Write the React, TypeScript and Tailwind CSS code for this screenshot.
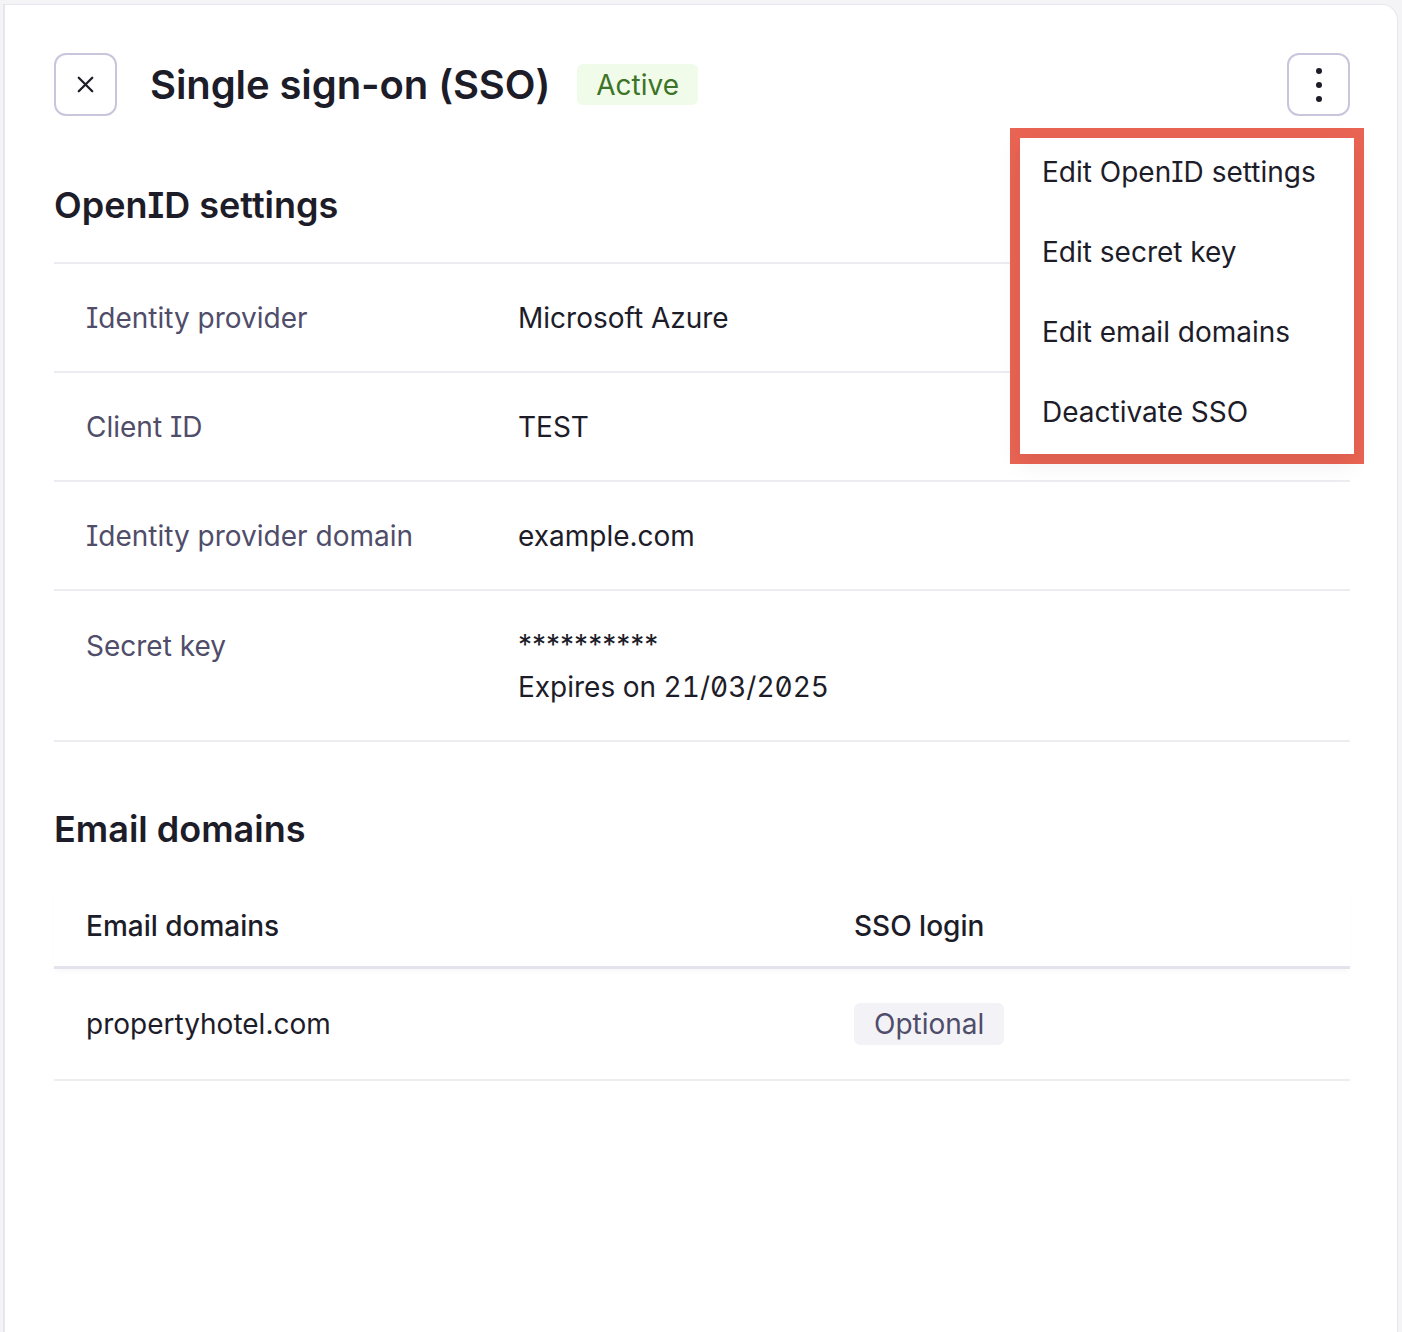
import { X } from 'lucide-react'

const rows = [
  { label: 'Identity provider', value: 'Microsoft Azure' },
  { label: 'Client ID', value: 'TEST' },
  { label: 'Identity provider domain', value: 'example.com' },
]

const menuItems = ['Edit OpenID settings', 'Edit secret key', 'Edit email domains', 'Deactivate SSO']

export default function App() {
  return (
    <div className="min-h-[1332px] bg-[#f4f4f6] pl-[3px] pt-[4px] pr-[4px] font-['Inter','Liberation_Sans',sans-serif] text-[#1d1c29] [font-feature-settings:'cv08']">
      <div className="relative min-h-[1328px] rounded-tr-[16px] border-l-[2px] border-t border-r border-[#e7e6ef] bg-white pl-[49px] pr-[47px] pt-[48px]">
        {/* header */}
        <div className="flex h-[63px] items-center">
          <button className="flex h-[63px] w-[63px] items-center justify-center rounded-[12px] border-[2px] border-[#c8c6dc] bg-white">
            <X size={27} strokeWidth={2} className="text-[#1d1c29]" />
          </button>
          <h1 className="ml-[33px] text-[40px] font-semibold leading-none tracking-[-0.1px]">Single sign-on (SSO)</h1>
          <span className="ml-[27px] flex h-[41px] items-center rounded-[6px] bg-[#f0fbea] px-[19px] text-[28px] text-[#3d7427]">
            Active
          </span>
          <button className="ml-auto flex h-[63px] w-[63px] items-center justify-center rounded-[12px] border-[2px] border-[#c8c6dc] bg-white">
            <span className="flex flex-col gap-[8px]">
              <span className="h-[6px] w-[6px] rounded-full bg-[#1d1c29]" />
              <span className="h-[6px] w-[6px] rounded-full bg-[#1d1c29]" />
              <span className="h-[6px] w-[6px] rounded-full bg-[#1d1c29]" />
            </span>
          </button>
        </div>

        {/* OpenID settings */}
        <h2 className="mt-[67px] text-[36px] font-semibold leading-[44px]">OpenID settings</h2>
        <div className="mt-[35px] border-t-[2px] border-[#ececf1]">
          {rows.map(r => (
            <div key={r.label} className="flex h-[109px] items-center border-b-[2px] border-[#ececf1] px-[32px] text-[28px]">
              <span className="w-[432px] text-[#4f4d6a]">{r.label}</span>
              <span>{r.value}</span>
            </div>
          ))}
          <div className="flex border-b-[2px] border-[#ececf1] px-[32px] pt-[36px] pb-[30px] text-[28px] leading-[46px]">
            <span className="-mt-[4px] w-[432px] text-[#4f4d6a]">Secret key</span>
            <div>
              <div className="leading-[37px]">**********</div>
              <div className="slashed-zero tabular-nums">Expires on 21/03/2025</div>
            </div>
          </div>
        </div>

        {/* Email domains */}
        <h2 className="mt-[65px] text-[36px] font-semibold leading-[44px]">Email domains</h2>
        <div className="mt-[34px]">
          <div className="grid h-[84px] grid-cols-[768px_1fr] items-center border-b-[3px] border-[#e4e3eb] px-[32px] text-[28px] font-medium shadow-[0_4px_6px_-2px_rgba(0,0,0,0.04)]">
            <span>Email domains</span>
            <span>SSO login</span>
          </div>
          <div className="grid h-[112px] grid-cols-[768px_1fr] items-center border-b-[2px] border-[#ececf1] px-[32px] text-[28px]">
            <span>propertyhotel.com</span>
            <span>
              <span className="inline-flex h-[42px] items-center rounded-[6px] bg-[#f3f3f7] px-[20px] text-[#4f4d6a]">Optional</span>
            </span>
          </div>
        </div>

        {/* dropdown menu (highlighted) */}
        <div className="absolute left-[1005px] top-[123px] h-[336px] w-[354px] border-[10px] border-[#ea6453]">
          <div className="flex h-full flex-col gap-[40px] bg-white pt-[14px] pl-[22px] shadow-[0_8px_24px_rgba(0,0,0,0.08)]">
            {menuItems.map(m => (
              <div key={m} className="h-[40px] text-[28px] leading-[40px] text-[#1d1c29]">
                {m}
              </div>
            ))}
          </div>
        </div>
      </div>
    </div>
  )
}
